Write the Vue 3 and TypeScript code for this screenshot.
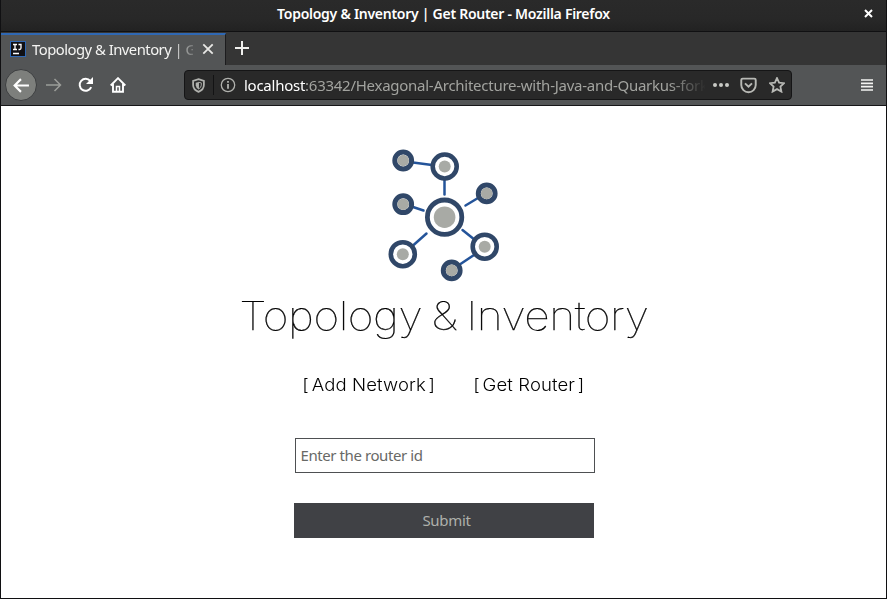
<script setup lang="ts">
import { ref } from 'vue'

interface Link { x1: number; y1: number; x2: number; y2: number }
interface Node { x: number; y: number; r: number; w: number; core: number }

const routerId = ref('')
const menu: string[] = ['Add Network', 'Get Router']

const links: Link[] = [
  { x1: 33, y1: 22.5, x2: 52, y2: 25 },
  { x1: 64.5, y1: 39, x2: 64.5, y2: 54.5 },
  { x1: 85.5, y1: 65.5, x2: 98, y2: 58 },
  { x1: 33, y1: 67, x2: 43.5, y2: 70.5 },
  { x1: 46.5, y1: 93.5, x2: 33, y2: 105.5 },
  { x1: 82.5, y1: 90, x2: 95, y2: 100 },
  { x1: 94, y1: 115, x2: 79, y2: 125 },
]
const nodes: Node[] = [
  { x: 23.2, y: 20.5, r: 8.4, w: 5, core: 5.8 },
  { x: 64.7, y: 26.5, r: 12, w: 4.6, core: 6 },
  { x: 106.7, y: 53.4, r: 8.4, w: 5, core: 5.8 },
  { x: 23.2, y: 64.2, r: 8.4, w: 5, core: 5.8 },
  { x: 64.6, y: 77.2, r: 17.2, w: 4.8, core: 10.8 },
  { x: 22.8, y: 114.2, r: 12, w: 4.6, core: 6 },
  { x: 104.7, y: 106.7, r: 12, w: 4.6, core: 6 },
  { x: 71.7, y: 130.4, r: 8.4, w: 5, core: 5.8 },
]
</script>

<template>
  <div class="window">
    <header class="titlebar">
      <span class="title">Topology &amp; Inventory | Get Router - Mozilla Firefox</span>
      <svg class="win-close" viewBox="0 0 9 9"><path d="M1 1l7 7M8 1L1 8" /></svg>
    </header>

    <div class="tabs">
      <div class="tab">
        <svg class="favicon" viewBox="0 0 16 16">
          <rect x=".5" y=".5" width="15" height="15" fill="#101014" stroke="#2f68b4" />
          <path d="M3 3.5h4M5 3.5v5M3 8.5h4M8.5 3.5h2.500V7q0 1.500-1.500 1.500H8.500M3 12.500h6" fill="none" stroke="#fff" stroke-width="1.3" />
        </svg>
        <span class="tab-text">Topology &amp; Inventory | G</span>
        <svg class="tab-close" viewBox="0 0 12 12"><path d="M1.3 1.3l9.4 9.4M10.7 1.3l-9.4 9.4" /></svg>
      </div>
      <svg class="plus" viewBox="0 0 14 14"><path d="M7 0v14M0 7h14" /></svg>
    </div>

    <nav class="toolbar">
      <button class="back" aria-label="Back">
        <svg viewBox="0 0 16 16"><path d="M15 8H1.5M7.5 2L1.5 8l6 6" /></svg>
      </button>
      <svg class="icon forward" viewBox="0 0 16 16"><path d="M0 8h14.5M8.5 2l6 6-6 6" /></svg>
      <svg class="icon reload" viewBox="0 0 16 16">
        <path d="M13.2 10.2A6 6 0 1 1 12.3 4" /><path class="solid" d="M15 0v7H8z" />
      </svg>
      <svg class="icon home" viewBox="0 0 16 16">
        <path d="M.7 8.5L8 1.2l7.3 7.3M3 7v7.8h10V7" /><path d="M6.500 14.500V9.500h3v5" stroke-width="1.500" />
      </svg>
      <div class="urlbar">
        <svg class="shield" viewBox="0 0 14 16">
          <path d="M7 1.2L12.8 3v4.5q0 5-5.8 7.3Q1.200 12.500 1.200 7.500V3z" />
          <path class="solid" d="M7.500 4.200L4 5v2.800q0 2.700 3.500 4.400z" /><path class="thin" d="M7 4.500L10 5.200v2.500q0 2.500-3 4.200" />
        </svg>
        <i class="divider"></i>
        <svg class="info" viewBox="0 0 16 16">
          <circle cx="8" cy="8" r="6.700" /><path d="M8 7v4.800" /><path d="M8 4v1.800" />
        </svg>
        <span class="url"><b>localhost</b>:63342/Hexagonal-Architecture-with-Java-and-Quarkus-fork</span>
        <svg class="dots" viewBox="0 0 16 4"><circle cx="2" cy="2" r="2" /><circle cx="8" cy="2" r="2" /><circle cx="14" cy="2" r="2" /></svg>
        <svg class="pocket" viewBox="0 0 16 16">
          <path d="M2.500 1.500h11q1.300 0 1.300 1.300V7.500a6.800 6.800 0 0 1-13.600 0V2.800q0-1.300 1.300-1.300z" /><path d="M4.700 6L8 9.200 11.300 6" />
        </svg>
        <svg class="star" viewBox="0 0 16 16">
          <path d="M8 1l2.100 4.600 5 .6-3.700 3.400 1 5L8 12.100l-4.400 2.500 1-5L.9 6.200l5-.6z" />
        </svg>
      </div>
      <svg class="burger" viewBox="0 0 12 12"><path d="M0 1h12M0 4.300h12M0 7.700h12M0 11h12" /></svg>
    </nav>

    <main class="page">
      <svg class="logo" viewBox="0 0 130 145">
        <line v-for="(l, i) in links" :key="'l' + i" v-bind="l" stroke="#24549a" stroke-width="2.500" stroke-linecap="round" />
        <g v-for="(n, i) in nodes" :key="'n' + i">
          <circle :cx="n.x" :cy="n.y" :r="n.r" fill="#fff" stroke="#304768" :stroke-width="n.w" />
          <circle :cx="n.x" :cy="n.y" :r="n.core" fill="#a8aaa5" />
        </g>
      </svg>
      <h1>Topology &amp; Inventory</h1>
      <div class="menu">
        <a v-for="m in menu" :key="m"><i>[</i>{{ m }}<i>]</i></a>
      </div>
      <form @submit.prevent>
        <input v-model="routerId" placeholder="Enter the router id" />
        <button class="submit">Submit</button>
      </form>
    </main>
  </div>
</template>

<style>
body { margin: 0; overflow: hidden; }
</style>

<style scoped>
* { box-sizing: border-box; }
svg { flex: none; fill: none; display: block; }
.window {
  width: 887px; height: 599px; background: #fff; border: 1px solid #101012; border-top: 0;
  display: flex; flex-direction: column; font-family: "Noto Sans", sans-serif;
}
.titlebar {
  height: 32px; flex: none; display: grid; grid-template-columns: 1fr auto 1fr; align-items: center;
  background: linear-gradient(#2a2a2a, #282828 60%, #222); border-bottom: 1px solid #101012; padding: 0 14px 3px;
}
.title { grid-column: 2; color: #fff; font-size: 14px; font-weight: 600; letter-spacing: -.27px; line-height: 20px; white-space: nowrap; }
.win-close { width: 9px; height: 9px; justify-self: end; stroke: #fff; stroke-width: 2; margin-right: -1px; margin-top: -2px; }
.tabs { height: 33px; flex: none; background: #353535; display: flex; padding-top: 1px; }
.tab {
  width: 225px; height: 32px; background: #535556; border-top: 2px solid #2f68b4; border-right: 1px solid #1c1c1e;
  display: flex; align-items: center; padding: 0 11px 2px 9px;
}
.favicon { width: 16px; height: 16px; margin-right: 6px; }
.tab-text {
  width: 161px; font-size: 14.8px; letter-spacing: -.5px; line-height: 22px; color: #f4f4f2; white-space: nowrap; overflow: hidden;
  mask-image: linear-gradient(90deg, #000 138px, transparent 168px);
}
.tab-close { width: 12px; height: 12px; margin-left: 9px; stroke: #e8e8e6; stroke-width: 1.8; }
.plus { width: 14px; height: 14px; margin: 8px 0 0 9px; stroke: #f0f0ee; stroke-width: 2; }
.toolbar {
  height: 41px; flex: none; background: #535556; border-bottom: 1px solid #161618; display: flex; align-items: center; padding: 0 13px 0 4px;
}
.back {
  width: 32px; height: 32px; border-radius: 50%; border: 1px solid #3c3e40; padding: 0; background: #7d7f7c;
  display: flex; align-items: center; justify-content: center;
}
.back svg { width: 17px; height: 17px; stroke: #fff; stroke-width: 2; }
.icon { width: 16px; height: 16px; stroke: #fff; stroke-width: 2; }
.solid { fill: currentColor; stroke: none; }
.forward { margin-left: 9px; stroke: #9b9d99; stroke-width: 1.5; }
.reload { margin-left: 16px; color: #fff; }
.home { margin-left: 16px; stroke-width: 1.9; }
.urlbar {
  width: 608px; height: 30px; margin-left: 58px; background: #292929; border: 1px solid #151516; border-radius: 4px;
  display: flex; align-items: center; padding: 0 6px 0 7px;
}
.shield { width: 13px; height: 15px; stroke: #b0b1ad; color: #b0b1ad; stroke-width: 1.9; }
.shield .thin { stroke-width: 1; }
.divider { width: 1px; height: 20px; background: #131314; margin: 0 6px 0 8px; }
.info { width: 16px; height: 16px; stroke: #b0b1ad; stroke-width: 1.3; }
.info path { stroke-width: 1.8; }
.url {
  width: 462px; margin-left: 8px; font-size: 15px; letter-spacing: -.26px; line-height: 22px; color: #a2a39f; white-space: nowrap; overflow: hidden;
  mask-image: linear-gradient(90deg, #000 425px, transparent 462px);
}
.url b { color: #fff; font-weight: 400; }
.dots { width: 16px; height: 4px; margin-left: 8px; fill: #c8c9c5; }
.pocket { width: 17px; height: 17px; margin-left: 11px; stroke: #b8b9b5; stroke-width: 1.8; }
.star { width: 16px; height: 16px; margin-left: 12px; stroke: #b8b9b5; stroke-width: 1.8; }
.burger { width: 12px; height: 12px; margin-left: auto; stroke: #f4f4f2; stroke-width: 1.7; }
.page { flex: 1; display: flex; flex-direction: column; align-items: center; padding-top: 34px; }
.logo { width: 130px; height: 145px; margin-left: 3px; }
h1 {
  margin: 5px 0 0; font: 100 39.5px/52px Inter, "Noto Sans", sans-serif; letter-spacing: -.4px; word-spacing: -2.5px; color: #000; white-space: nowrap;
  transform: scaleX(1.125); -webkit-text-stroke: .25px #000;
}
.menu {
  display: flex; gap: 35px; margin-top: 31px; font: 300 17px/24px Inter, "Noto Sans", sans-serif; letter-spacing: .1px; color: #000; white-space: nowrap;
  transform: scaleX(1.09);
}
.menu a { display: flex; gap: 2.5px; }
.menu i { font-style: normal; }
form { display: flex; flex-direction: column; align-items: center; margin-top: 41px; }
input, .submit { width: 300px; height: 35px; font: 15px "Noto Sans", sans-serif; letter-spacing: -.42px; border-radius: 0; }
input { border: 1px solid #4e5052; padding: 0 6px 1px 5px; background: #fff; margin-left: 2px; outline: 0; }
input::placeholder { color: #686966; opacity: 1; }
.submit { margin-top: 30px; border: 0; background: #404145; color: #aeb0ab; padding: 0 0 1px 6px; letter-spacing: -.3px; }
</style>
